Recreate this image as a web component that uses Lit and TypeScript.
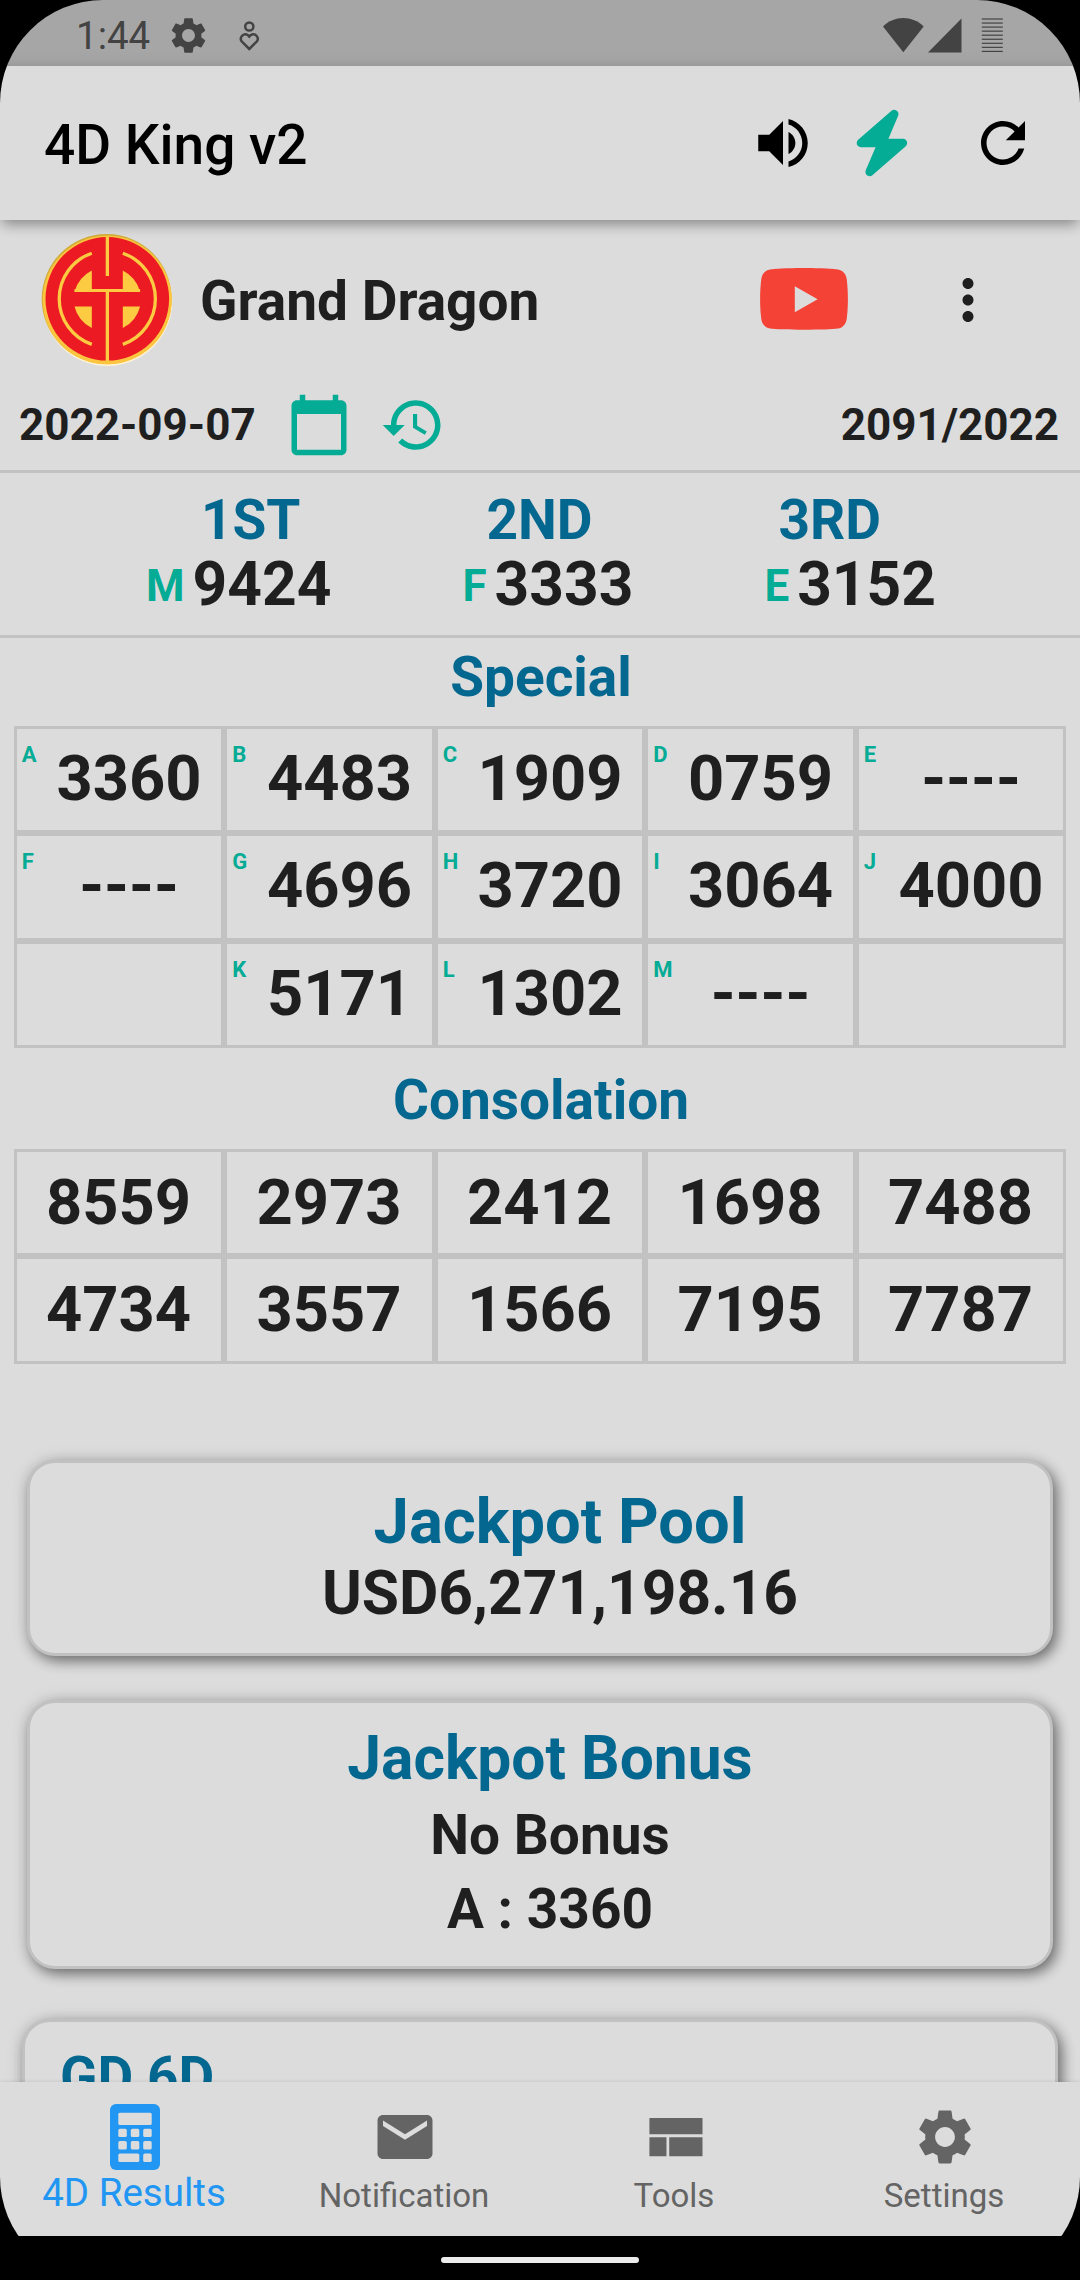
import { LitElement, html, css, svg, nothing } from "lit";
import { customElement, property } from "lit/decorators.js";
import { classMap } from "lit/directives/class-map.js";

interface Prize {
  label: string;
  letter: string;
  value: string;
}

interface Cell {
  letter?: string;
  value?: string;
}

const GEAR =
  "M19.14,12.94c0.04-0.3,0.06-0.61,0.06-0.94c0-0.32-0.02-0.64-0.07-0.94l2.03-1.58c0.18-0.14,0.23-0.41,0.12-0.61l-1.92-3.32c-0.12-0.22-0.37-0.29-0.59-0.22l-2.39,0.96c-0.5-0.38-1.03-0.7-1.62-0.94L14.4,2.81c-0.04-0.24-0.24-0.41-0.48-0.41h-3.84c-0.24,0-0.43,0.17-0.47,0.41L9.25,5.35C8.66,5.59,8.12,5.92,7.63,6.29L5.24,5.33c-0.22-0.08-0.47,0-0.59,0.22L2.74,8.87C2.62,9.08,2.66,9.34,2.86,9.48l2.03,1.58C4.84,11.36,4.8,11.69,4.8,12s0.02,0.64,0.07,0.94l-2.03,1.58c-0.18,0.14-0.23,0.41-0.12,0.61l1.92,3.32c0.12,0.22,0.37,0.29,0.59,0.22l2.39-0.96c0.5,0.38,1.03,0.7,1.62,0.94l0.36,2.54c0.05,0.24,0.24,0.41,0.48,0.41h3.84c0.24,0,0.44-0.17,0.47-0.41l0.36-2.54c0.59-0.24,1.13-0.56,1.62-0.94l2.39,0.96c0.22,0.08,0.47,0,0.59-0.22l1.92-3.32c0.12-0.22,0.07-0.47-0.12-0.61L19.14,12.94z M12,15.6c-1.98,0-3.6-1.62-3.6-3.6s1.62-3.6,3.6-3.6s3.6,1.62,3.6,3.6S13.98,15.6,12,15.6z";

const ICONS: Record<string, string> = {
  gear: GEAR,
  volume:
    "M3 9v6h4l5 5V4L7 9H3zm13.5 3c0-1.77-1.02-3.29-2.5-4.03v8.05c1.48-.73 2.5-2.25 2.5-4.02zM14 3.23v2.06c2.89.86 5 3.54 5 6.71s-2.11 5.85-5 6.71v2.06c4.01-.91 7-4.49 7-8.77s-2.99-7.86-7-8.77z",
  refresh:
    "M17.65 6.35C16.2 4.9 14.21 4 12 4c-4.42 0-7.99 3.58-7.99 8s3.57 8 7.99 8c3.73 0 6.84-2.55 7.73-6h-2.08c-.82 2.33-3.04 4-5.65 4-3.31 0-6-2.69-6-6s2.69-6 6-6c1.66 0 3.14.69 4.22 1.78L13 11h7V4l-2.35 2.35z",
  calendar:
    "M20 3h-1V1h-2v2H7V1H5v2H4c-1.1 0-2 .9-2 2v16c0 1.1.9 2 2 2h16c1.1 0 2-.9 2-2V5c0-1.1-.9-2-2-2zm0 18H4V8h16v13z",
  history:
    "M13 3c-4.97 0-9 4.03-9 9H1l3.89 3.89.07.14L9 12H6c0-3.87 3.13-7 7-7s7 3.13 7 7-3.13 7-7 7c-1.93 0-3.68-.79-4.94-2.06l-1.42 1.42C8.27 19.99 10.51 21 13 21c4.97 0 9-4.03 9-9s-4.03-9-9-9zm-1 5v5l4.28 2.54.72-1.21-3.5-2.08V8H12z",
  more: "M12 8c1.1 0 2-.9 2-2s-.9-2-2-2-2 .9-2 2 .9 2 2 2zm0 2c-1.1 0-2 .9-2 2s.9 2 2 2 2-.9 2-2-.9-2-2-2zm0 6c-1.1 0-2 .9-2 2s.9 2 2 2 2-.9 2-2-.9-2-2-2z",
  mail: "M20 4H4c-1.1 0-1.99.9-1.99 2L2 18c0 1.1.9 2 2 2h16c1.1 0 2-.9 2-2V6c0-1.1-.9-2-2-2zm0 4l-8 5-8-5V6l8 5 8-5v2z",
  tools: "M2.7 5.1h19.3v5.9H2.7zM2.7 12.1h6.2v6.9H2.7zM9.9 12.1h12.1v6.9H9.9z",
};

@customElement("md-icon")
class MdIcon extends LitElement {
  @property() name = "";
  static styles = css`
    :host { display: block; width: 66px; height: 66px; flex: none; }
    svg { display: block; width: 100%; height: 100%; fill: currentColor; }
  `;
  render() {
    return html`<svg viewBox="0 0 24 24"><path d=${ICONS[this.name] ?? ""}></path></svg>`;
  }
}

@customElement("status-bar")
class StatusBar extends LitElement {
  static styles = css`
    :host {
      display: flex; align-items: center; height: 66px; box-sizing: border-box;
      padding: 0 77px 0 76px; background: #a6a6a6; color: #434343;
      font: 400 38.5px/66px Roboto, sans-serif;
    }
    .time { width: 91px; padding-top: 6px; line-height: 60px; }
    .gear { width: 43px; height: 43px; margin-top: 5px; }
    .heart { display: block; margin: 5px auto 0 28px; }
    .signals { display: block; margin-top: 4px; }
  `;
  render() {
    const bars = [0, 1, 2, 3, 4, 5, 6, 7, 8];
    return html`
      <span class="time">1:44</span>
      <md-icon class="gear" name="gear"></md-icon>
      <svg class="heart" width="24" height="34" viewBox="0 0 24 34" fill="none" stroke="currentColor" stroke-width="2.5">
        <circle cx="11.3" cy="7.5" r="4.1"></circle>
        <path d="M11.3 30 L3.6 22.3 A4.5 4.5 0 0 1 10 16.2 L11.3 17.6 L12.6 16.2 A4.5 4.5 0 0 1 19 22.3 Z"></path>
      </svg>
      <svg class="signals" width="120" height="36" viewBox="0 0 120 36" fill="currentColor">
        <path d="M20.3 35.3 L0 9.5 C11 -2 29.500 -2 40.700 9.500 Z"></path>
        <path d="M45 35.500 L78.500 1.500 V35.500 Z"></path>
        ${bars.map((i) => svg`<rect x="98.800" y=${1.4 + i * 4.05} width="21" height="1.200"></rect>`)}
      </svg>
    `;
  }
}

@customElement("number-grid")
class NumberGrid extends LitElement {
  @property({ attribute: false }) cells: Cell[] = [];
  static styles = css`
    :host {
      display: grid; grid-template-columns: repeat(5, 1fr); grid-auto-rows: 107.33px;
      margin: 0 13.75px; font: 700 63.25px/102px Roboto, sans-serif; color: #1f1f1f;
    }
    .cell {
      display: flex; border: 3px solid #c2c2c2; box-sizing: border-box; min-width: 0;
    }
    .letter {
      width: 20px; flex: none; box-sizing: border-box; padding: 11px 0 0 5px;
      font-size: 22px; line-height: 30px; color: #04ab95; white-space: nowrap;
    }
    .value { flex: 1; text-align: center; height: 100px; line-height: 99px; }
    .plain { line-height: 101px; padding-right: 1px; }
  `;
  render() {
    return this.cells.map(
      (c) => html`<div class="cell">
        ${c.letter ? html`<span class="letter">${c.letter}</span>` : nothing}
        ${c.value ? html`<span class=${classMap({ value: true, plain: !c.letter })}>${c.value}</span>` : nothing}
      </div>`
    );
  }
}

@customElement("bottom-nav")
class BottomNav extends LitElement {
  static styles = css`
    :host {
      display: grid; grid-template-columns: repeat(4, 1fr); height: 154px; box-sizing: border-box;
      padding-top: 22px; background: #dcdcdc; color: #646464; position: relative;
      box-shadow: 0 -1px 3px rgba(0, 0, 0, 0.08); font: 400 33px/52px Roboto, sans-serif;
    }
    .item { display: flex; flex-direction: column; align-items: center; }
    .label { padding-right: 2px; }
    .active { color: #2196f3; font-size: 38.5px; line-height: 46px; }
    .calc { display: block; }
  `;
  render() {
    return html`
      <div class="item active">
        <svg class="calc" width="50" height="66" viewBox="0 0 50 66">
          <rect width="50" height="66" rx="6" fill="currentColor"></rect>
          <g fill="#dcdcdc">
            <rect x="8.300" y="8.700" width="33.400" height="12.300" rx="1.600"></rect>
            <rect x="8.300" y="24.800" width="8.500" height="8.300" rx="1.600"></rect>
            <rect x="20.800" y="24.800" width="8.500" height="8.300" rx="1.600"></rect>
            <rect x="33.200" y="24.800" width="8.500" height="8.300" rx="1.600"></rect>
            <rect x="8.300" y="37.100" width="8.500" height="8.500" rx="1.600"></rect>
            <rect x="20.800" y="37.100" width="8.500" height="8.500" rx="1.600"></rect>
            <rect x="33.200" y="37.100" width="8.500" height="8.500" rx="1.600"></rect>
            <rect x="8.300" y="49.500" width="21" height="8.500" rx="1.600"></rect>
            <rect x="33.200" y="49.500" width="8.500" height="8.500" rx="1.600"></rect>
          </g>
        </svg>
        <span class="label">4D Results</span>
      </div>
      <div class="item"><md-icon name="mail"></md-icon><span class="label">Notification</span></div>
      <div class="item"><md-icon name="tools"></md-icon><span class="label">Tools</span></div>
      <div class="item"><md-icon name="gear"></md-icon><span class="label">Settings</span></div>
    `;
  }
}

@customElement("app-root")
class AppRoot extends LitElement {
  prizes: Prize[] = [
    { label: "1ST", letter: "M", value: "9424" },
    { label: "2ND", letter: "F", value: "3333" },
    { label: "3RD", letter: "E", value: "3152" },
  ];

  special: Cell[] = [
    { letter: "A", value: "3360" },
    { letter: "B", value: "4483" },
    { letter: "C", value: "1909" },
    { letter: "D", value: "0759" },
    { letter: "E", value: "----" },
    { letter: "F", value: "----" },
    { letter: "G", value: "4696" },
    { letter: "H", value: "3720" },
    { letter: "I", value: "3064" },
    { letter: "J", value: "4000" },
    {},
    { letter: "K", value: "5171" },
    { letter: "L", value: "1302" },
    { letter: "M", value: "----" },
    {},
  ];

  consolation: Cell[] = ["8559", "2973", "2412", "1698", "7488", "4734", "3557", "1566", "7195", "7787"].map(
    (value) => ({ value })
  );

  static styles = css`
    :host { display: block; background: #000; }
    .screen {
      display: flex; flex-direction: column; width: 1080px; height: 2280px; overflow: hidden;
      border-radius: 103px; background: #000; color: #1f1f1f;
      font: 700 55px/1 Roboto, sans-serif;
    }
    .appbar {
      display: flex; align-items: center; height: 154px; flex: none; box-sizing: border-box;
      padding: 0 44px; background: #dcdcdc; color: #000; position: relative; z-index: 1;
      box-shadow: 0 7px 12px -3px rgba(0, 0, 0, 0.3), 0 2px 16px rgba(0, 0, 0, 0.14);
    }
    .title { flex: 1; margin: 4px 0 0; font: 500 55px/64px Roboto, sans-serif; }
    .bolt { display: block; margin: 0 58px 0 36px; color: #04ab95; }
    .body { flex: none; height: 1862px; overflow: hidden; background: #dcdcdc; }
    .brand { display: flex; align-items: center; height: 162px; padding: 0 79px 0 41px; box-sizing: border-box; }
    .logo { display: block; margin-bottom: 2px; }
    .name { flex: 1; margin: 0 0 0 25px; font: inherit; line-height: 64px; }
    .tube { display: block; margin: 0 87px 4px 0; }
    .dots { margin-bottom: 2px; }
    .draw {
      display: flex; align-items: center; height: 88px; padding: 0 21px 2px 19px; box-sizing: border-box;
      font-size: 44px; line-height: 52px; border-bottom: 0;
    }
    .teal { color: #04ab95; }
    .cal { margin: 0 28px 0 30px; }
    .number { margin-left: auto; }
    .rule { height: 3px; background: #c2c2c2; }
    .top { height: 162px; padding: 15px 13px 0 15px; box-sizing: border-box; }
    .labels, .winners { display: flex; justify-content: space-evenly; }
    .labels { line-height: 64px; color: #03678f; }
    .winners { font-size: 60.5px; line-height: 65px; }
    .win { display: flex; gap: 8px; }
    .win-letter { font-size: 44px; line-height: 68px; color: #04ab95; }
    .heading { margin: 0 0 10px; padding-left: 2px; font: inherit; line-height: 78px; text-align: center; color: #03678f; }
    .second { margin: 12px 0 9px; line-height: 80px; }
    .card {
      margin: 0 27px; box-sizing: border-box; border: 3px solid #c1c1c1; border-radius: 28px;
      background: #dcdcdc; text-align: center;
      box-shadow: 4px 5px 13px rgba(0, 0, 0, 0.46), 0 1px 18px rgba(0, 0, 0, 0.12);
    }
    .card-title { margin: 0; font: inherit; color: #03678f; }
    .line { margin: 0; }
    .pool { height: 196px; margin-top: 96px; padding: 22px 0 0 40px; }
    .pool .card-title { font-size: 63.25px; line-height: 73px; }
    .pool .line { font-size: 60.5px; line-height: 71px; }
    .bonus { height: 269px; margin-top: 44px; padding: 20px 0 0 20px; }
    .bonus .card-title { font-size: 60.5px; line-height: 72px; }
    .bonus .line { line-height: 80px; }
    .bonus .last { line-height: 68px; }
    .six { height: 300px; margin: 50px 22px 0; padding: 20px 35px; text-align: left; line-height: 70px; }
    .gesture { flex: 1; display: flex; justify-content: center; align-items: center; }
    .pill { width: 198px; height: 6px; margin-top: 4px; border-radius: 3px; background: #ececec; }
  `;

  render() {
    return html`
      <div class="screen">
        <status-bar></status-bar>
        <header class="appbar">
          <h1 class="title">4D King v2</h1>
          <md-icon name="volume"></md-icon>
          <svg class="bolt" width="60" height="70" viewBox="852 108 60 70" fill="currentColor"
            stroke="currentColor" stroke-width="8.400" stroke-linejoin="round">
            <path d="M894.300 114 L860.900 143 H882 L869.600 172 L903 143 H882 Z"></path>
          </svg>
          <md-icon name="refresh"></md-icon>
        </header>
        <main class="body">
          <section class="brand">
            <svg class="logo" width="134" height="134" viewBox="0 0 134 134">
              <circle cx="66.300" cy="68" r="65" fill="#fff4d8"></circle>
              <circle cx="65.700" cy="66" r="65" fill="#cfae38"></circle>
              <circle cx="66.200" cy="67" r="64.500" fill="#fbc53f"></circle>
              <circle cx="66.300" cy="65.800" r="61.800" fill="#ec1b23"></circle>
              <g fill="#fccb42">
                <rect x="64.700" y="4" width="3.300" height="39"></rect>
                <rect x="64.700" y="56" width="3.300" height="72"></rect>
                <rect x="33.500" y="56" width="65.600" height="3"></rect>
                <path d="M33.500 59 A33.500 33.500 0 0 1 50.800 37.600 V59 Z"></path>
                <path d="M99.100 59 A33.500 33.500 0 0 0 81.800 37.600 V59 Z"></path>
                <path d="M33.500 73.400 A33.500 33.500 0 0 0 50.800 95 V73.400 Z"></path>
                <path d="M99.100 73.400 A33.500 33.500 0 0 1 81.800 95 V73.400 Z"></path>
              </g>
              <g fill="none" stroke="#fccb42" stroke-width="3.300">
                <path d="M50.800 20.200 A48.200 48.200 0 0 0 50.800 111.400"></path>
                <path d="M81.800 20.200 A48.200 48.200 0 0 1 81.800 111.400"></path>
              </g>
            </svg>
            <h2 class="name">Grand Dragon</h2>
            <svg class="tube" width="88" height="62" viewBox="0 0 88 62">
              <path fill="#f44336" fill-rule="evenodd"
                d="M44 0 C62 0 74 .8 78 1.400 C83 2.200 86 6 86.700 11 C88.300 23 88.300 39 86.700 51 C86 56 83 59.800 78 60.600 C68 62.200 20 62.200 10 60.600 C5 59.800 2 56 1.300 51 C-.3 39 -.3 23 1.300 11 C2 6 5 2.200 10 1.400 C14 .8 26 0 44 0 Z M34.800 18.300 V44.300 L57.600 31.300 Z"></path>
            </svg>
            <md-icon class="dots" name="more"></md-icon>
          </section>
          <section class="draw">
            <span>2022-09-07</span>
            <md-icon class="teal cal" name="calendar"></md-icon>
            <md-icon class="teal" name="history"></md-icon>
            <span class="number">2091/2022</span>
          </section>
          <div class="rule"></div>
          <section class="top">
            <div class="labels">${this.prizes.map((p) => html`<span>${p.label}</span>`)}</div>
            <div class="winners">
              ${this.prizes.map(
                (p) => html`<div class="win"><span class="win-letter">${p.letter}</span><span>${p.value}</span></div>`
              )}
            </div>
          </section>
          <div class="rule"></div>
          <h3 class="heading">Special</h3>
          <number-grid .cells=${this.special}></number-grid>
          <h3 class="heading second">Consolation</h3>
          <number-grid .cells=${this.consolation}></number-grid>
          <section class="card pool">
            <h3 class="card-title">Jackpot Pool</h3>
            <p class="line">USD6,271,198.16</p>
          </section>
          <section class="card bonus">
            <h3 class="card-title">Jackpot Bonus</h3>
            <p class="line">No Bonus</p>
            <p class="line last">A : 3360</p>
          </section>
          <section class="card six">
            <h3 class="card-title">GD 6D</h3>
          </section>
        </main>
        <bottom-nav></bottom-nav>
        <div class="gesture"><div class="pill"></div></div>
      </div>
    `;
  }
}
